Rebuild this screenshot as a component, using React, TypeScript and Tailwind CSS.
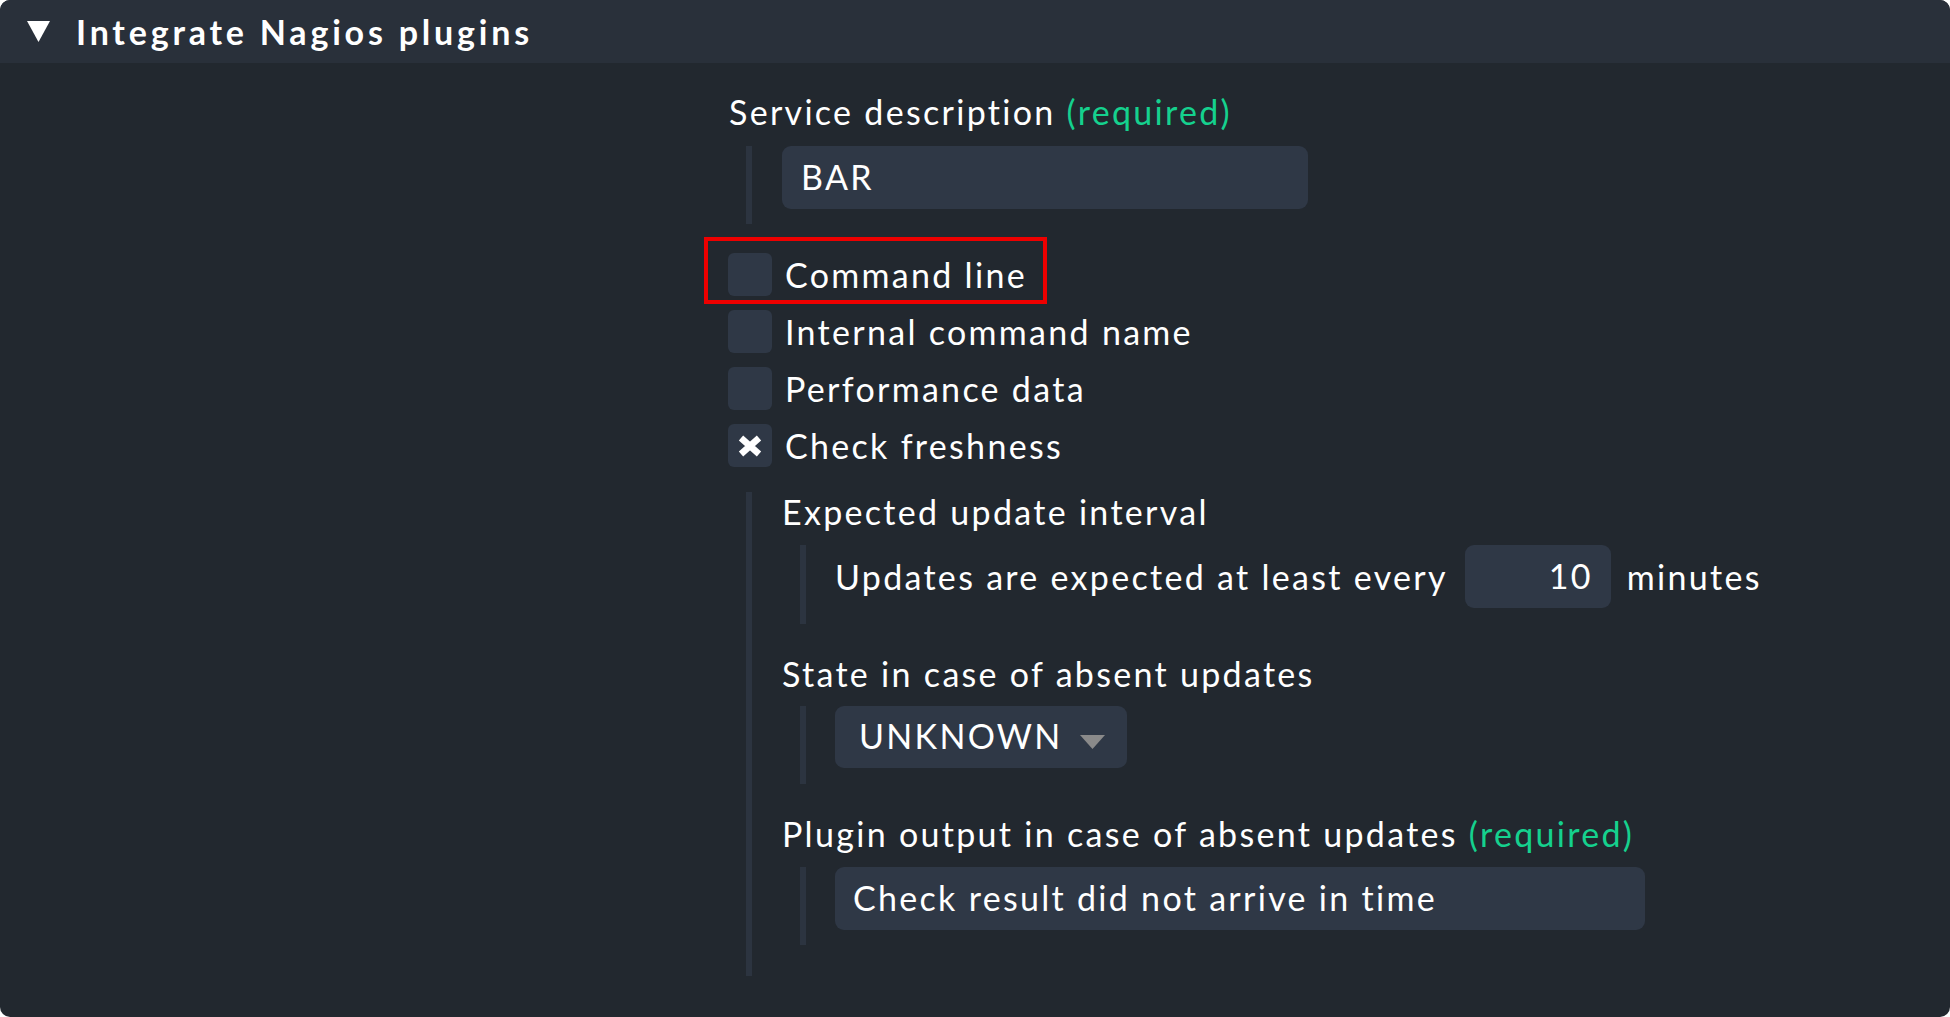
import React from 'react';

const font = { fontFamily: 'Lato, "Open Sans", sans-serif' };

const options = [
  { label: 'Command line', checked: false, marked: true },
  { label: 'Internal command name', checked: false, marked: false },
  { label: 'Performance data', checked: false, marked: false },
  { label: 'Check freshness', checked: true, marked: false },
];

const Required = () => <span className="text-[#15d18e]">(required)</span>;

const Checkbox: React.FC<{ checked: boolean }> = ({ checked }) => (
  <div className="w-[44px] h-[43px] rounded-[6px] bg-[#2f3846] flex items-center justify-center shrink-0">
    {checked && (
      <svg width="26" height="22" viewBox="0 0 26 22">
        <path d="M4 3 L22 19 M22 3 L4 19" stroke="#fff" strokeWidth="6.5" strokeLinecap="butt" />
      </svg>
    )}
  </div>
);

const Nested: React.FC<{ children: React.ReactNode; className?: string }> = ({ children, className = '' }) => (
  <div className={`border-l-[6px] border-[#2c3440] ${className}`}>{children}</div>
);

export default function App() {
  return (
    <div className="w-[1950px] h-[1017px] bg-white" style={font}>
      <div className="h-full rounded-[10px] bg-[#22282f] overflow-hidden text-white text-[34px] leading-[40px] tracking-[2.3px]">
        <div className="h-[63px] bg-[#29303a] flex items-center pl-[27px]">
          <svg width="23" height="21" viewBox="0 0 23 21" className="shrink-0">
            <polygon points="0,0 23,0 11.5,21" fill="#fff" />
          </svg>
          <span className="ml-[26px] font-bold text-[34px] tracking-[3.8px]">Integrate Nagios plugins</span>
        </div>

        <div className="pl-[729px] pt-[29px]">
          <div>
            Service description <Required />
          </div>
          <Nested className="mt-[14px] ml-[17px] pl-[30px] pb-[15px]">
            <div className="w-[526px] h-[63px] rounded-[9px] bg-[#2f3846] flex items-center pl-[19px] pb-[2px]">BAR</div>
          </Nested>

          <div className="mt-[29px] flex flex-col gap-[14px]">
            {options.map((o) => (
              <div key={o.label} className="relative flex items-center gap-[13px] -ml-px">
                <Checkbox checked={o.checked} />
                <span>{o.label}</span>
                {o.marked && (
                  <div className="absolute left-[-24px] top-[-16px] w-[343px] h-[67px] border-[4px] border-[#ee0000]" />
                )}
              </div>
            ))}
          </div>

          <Nested className="mt-[25px] ml-[17px] pl-[30px] pb-[31px]">
            <div>Expected update interval</div>
            <Nested className="mt-[13px] ml-[18px] pl-[29px] pb-[16px]">
              <div className="flex items-center">
                <span>Updates are expected at least every</span>
                <div className="ml-[17px] w-[146px] h-[63px] rounded-[9px] bg-[#2f3846] flex items-center justify-end pr-[18px] pb-[2px]">10</div>
                <span className="ml-[16px]">minutes</span>
              </div>
            </Nested>

            <div className="mt-[30px]">State in case of absent updates</div>
            <Nested className="mt-[12px] ml-[18px] pl-[29px] pb-[16px]">
              <div className="w-[292px] flex h-[62px] rounded-[9px] bg-[#2f3846] items-center pl-[24px] pb-[2px]">
                <span>UNKNOWN</span>
                <svg width="25" height="14" viewBox="0 0 25 14" className="ml-[17px] mt-[12px]">
                  <polygon points="0,0 25,0 12.5,14" fill="#8a8a8a" />
                </svg>
              </div>
            </Nested>

            <div className="mt-[30px]">
              Plugin output in case of absent updates <Required />
            </div>
            <Nested className="mt-[13px] ml-[18px] pl-[29px] pb-[15px]">
              <div className="w-[810px] h-[63px] rounded-[9px] bg-[#2f3846] flex items-center pl-[18px] pb-[2px]">
                Check result did not arrive in time
              </div>
            </Nested>
          </Nested>
        </div>
      </div>
    </div>
  );
}
